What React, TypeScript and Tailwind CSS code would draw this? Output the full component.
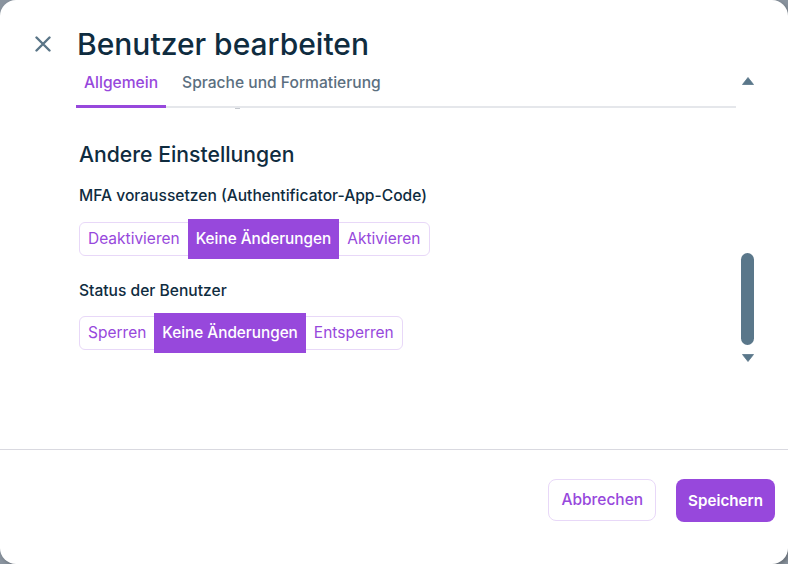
import React from "react";

function Segmented({ options, selected }: { options: string[]; selected: number }) {
  return (
    <div className="flex self-start rounded-md border border-[#e8d8f8]">
      {options.map((o, i) =>
        i === selected ? (
          <button
            key={o}
            className="h-[40px] -my-[4px] px-2 bg-[#9748dc] text-white text-[15.3px] leading-[22px] font-medium"
          >
            {o}
          </button>
        ) : (
          <button
            key={o}
            className="h-[32px] px-2 text-[#9748dc] text-[15.5px] leading-[22px] font-normal"
          >
            {o}
          </button>
        )
      )}
    </div>
  );
}

export default function App() {
  return (
    <div className="w-[788px] h-[564px] bg-[#8a949f] font-['Inter',sans-serif]">
      <div className="relative w-full h-full bg-white rounded-[16px] flex flex-col overflow-hidden shadow-[2px_2px_4px_rgba(0,0,0,0.25)]">
        {/* Header */}
        <div className="flex items-center pl-[35px] pt-[26px] gap-[26px]">
          <svg width="16" height="16" viewBox="0 0 16 16" className="shrink-0">
            <path d="M1.5 1.5 L14.5 14.5 M14.5 1.5 L1.5 14.5" stroke="#5a7587" strokeWidth="2.4" strokeLinecap="round" />
          </svg>
          <h1 className="text-[30px] leading-[36px] font-medium text-[#0f2c3f]">
            Benutzer bearbeiten
          </h1>
        </div>

        {/* Body */}
        <div className="relative flex-1 flex flex-col">
          <div className="relative mt-[10px] ml-[76px] mr-[52px] flex gap-2 border-b-2 border-[#e5e7eb]">
            <button className="relative px-2 pt-0 pb-[12px] text-[15.6px] leading-[22px] font-medium text-[#9748dc]">
              Allgemein
              <span className="absolute left-0 right-0 -bottom-[2px] h-[3px] bg-[#9748dc]" />
            </button>
            <button className="px-2 pt-0 pb-[12px] text-[15.6px] leading-[22px] font-medium text-[#5b6f80]">
              Sprache und Formatierung
            </button>
            <span className="absolute left-[159px] -bottom-[3px] w-[5px] h-[1px] bg-[#c4c8ce]" />
          </div>

          <div className="flex flex-col pl-[79px] pt-[32px]">
            <h2 className="text-[21.2px] leading-[28px] font-medium text-[#0f2c3f]">Andere Einstellungen</h2>
            <div className="mt-[17px] text-[15.6px] leading-[22px] font-medium text-[#0f2c3f]">
              MFA voraussetzen (Authentificator-App-Code)
            </div>
            <div className="mt-[15px] flex">
              <Segmented options={["Deaktivieren", "Keine Änderungen", "Aktivieren"]} selected={1} />
            </div>
            <div className="mt-[24px] text-[15.6px] leading-[22px] font-medium text-[#0f2c3f]">
              Status der Benutzer
            </div>
            <div className="mt-[14px] flex">
              <Segmented options={["Sperren", "Keine Änderungen", "Entsperren"]} selected={1} />
            </div>
          </div>

          {/* Scrollbar overlay */}
          <div className="absolute left-[741px] top-[15px] w-[13px] flex flex-col items-center">
            <svg width="12" height="8" viewBox="0 0 12 8">
              <path d="M6 0.5 L11.5 7.5 L0.5 7.5 Z" fill="#5a778a" strokeLinejoin="round" stroke="#5a778a" strokeWidth="0.8" />
            </svg>
          </div>
          <div className="absolute left-[741px] top-[191px] w-[13px] h-[92px] rounded-full bg-[#5a778a]" />
          <div className="absolute left-[741px] top-[292px] w-[13px] flex flex-col items-center">
            <svg width="12" height="8" viewBox="0 0 12 8">
              <path d="M0.5 0.5 L11.5 0.5 L6 7.5 Z" fill="#5a778a" strokeLinejoin="round" stroke="#5a778a" strokeWidth="0.8" />
            </svg>
          </div>
        </div>

        {/* Footer */}
        <div className="h-[115px] border-t border-[#d9d9e0] flex justify-end items-start gap-5 pt-[29px] pr-[13px]">
          <button className="h-[42px] px-[12px] rounded-lg border border-[#e8d8f8] text-[15.5px] leading-[22px] font-medium text-[#9748dc]">
            Abbrechen
          </button>
          <button className="h-[43px] px-[12px] rounded-lg bg-[#9748dc] text-[15.2px] leading-[22px] font-semibold text-white">
            Speichern
          </button>
        </div>
      </div>
    </div>
  );
}
